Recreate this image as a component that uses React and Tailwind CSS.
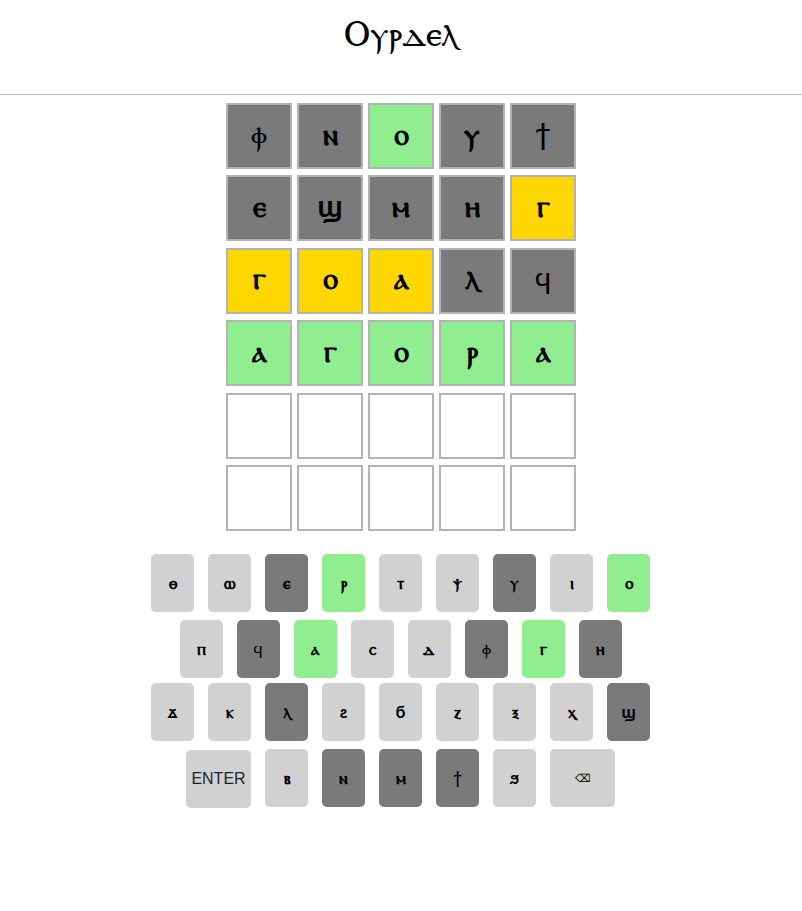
import React from "react";

const rows = [
  [["ⲫ","a"],["ⲛ","a"],["ⲟ","g"],["ⲩ","a"],["ϯ","a"]],
  [["ⲉ","a"],["ϣ","a"],["ⲙ","a"],["ⲏ","a"],["ⲅ","y"]],
  [["ⲅ","y"],["ⲟ","y"],["ⲁ","y"],["ⲗ","a"],["ϥ","a"]],
  [["ⲁ","g"],["ⲅ","g"],["ⲟ","g"],["ⲣ","g"],["ⲁ","g"]],
  [["","e"],["","e"],["","e"],["","e"],["","e"]],
  [["","e"],["","e"],["","e"],["","e"],["","e"]],
];
const tile = { a: "bg-[#7a7a7a]", g: "bg-[#90ee90]", y: "bg-[#ffd700]", e: "bg-white" };
const kb = [
  ["mt-0", [["ⲑ","n"],["ⲱ","n"],["ⲉ","a"],["ⲣ","g"],["ⲧ","n"],["ⲯ","n"],["ⲩ","a"],["ⲓ","n"],["ⲟ","g"]]],
  ["mt-[8px]", [["ⲡ","n"],["ϥ","a"],["ⲁ","g"],["ⲥ","n"],["ⲇ","n"],["ⲫ","a"],["ⲅ","g"],["ⲏ","a"]]],
  ["mt-[5px]", [["ϫ","n"],["ⲕ","n"],["ⲗ","a"],["ϩ","n"],["ϭ","n"],["ⲍ","n"],["ⲝ","n"],["ⲭ","n"],["ϣ","a"]]],
];
const key = { n: "bg-[#d1d1d1]", a: "bg-[#7a7a7a]", g: "bg-[#90ee90]" };
const thin = "ⲫϥϯ";
const Key = ({ c, t }) => (
  <div className={`w-[43px] h-[58px] rounded-[5px] flex items-center justify-center text-[17px] ${thin.includes(c) ? "font-normal" : "font-bold"} text-black ${key[t]}`}>{c}</div>
);
export default function App() {
  return (
    <div className="w-[802px] h-[911px] bg-white font-['Lato',sans-serif] flex flex-col items-center">
      <div className="w-full h-[95px] border-b border-[#b5b5b5] text-center text-[36px] text-black pt-[7px] leading-[50px]">Ⲟⲩⲣⲇⲉⲗ</div>
      <div className="mt-[8px] flex flex-col gap-[6.4px]">
        {rows.map((r, i) => (
          <div key={i} className="flex gap-[5px]">
            {r.map(([c, t], j) => (
              <div key={j} className={`w-[66px] h-[66px] border-2 border-[#b3b3b3] pb-[6px] flex items-center justify-center text-[30px] ${thin.includes(c) ? "font-normal" : "font-bold"} text-black ${tile[t]}`}>{c}</div>
            ))}
          </div>
        ))}
      </div>
      <div className="mt-[23px] pr-[1px] flex flex-col items-center">
        {kb.map(([m, r], i) => (
          <div key={i} className={`flex gap-[14px] ${m}`}>
            {r.map(([c, t], j) => <Key key={j} c={c} t={t} />)}
          </div>
        ))}
        <div className="flex gap-[14px] mt-[8px] items-start">
          <div className="mt-[1px] w-[65px] h-[58px] rounded-[5px] bg-[#d1d1d1] flex items-center justify-center text-[16px] text-[#222] font-['Liberation_Sans',sans-serif]">ENTER</div>
          {[["ⲃ","n"],["ⲛ","a"],["ⲙ","a"],["ϯ","a"],["ϧ","n"]].map(([c,t],j)=><Key key={j} c={c} t={t}/>)}
          <div className="w-[65px] h-[58px] rounded-[5px] bg-[#d1d1d1] flex items-center justify-center text-[11px] text-black font-['Liberation_Sans',sans-serif]">⌫</div>
        </div>
      </div>
    </div>
  );
}
